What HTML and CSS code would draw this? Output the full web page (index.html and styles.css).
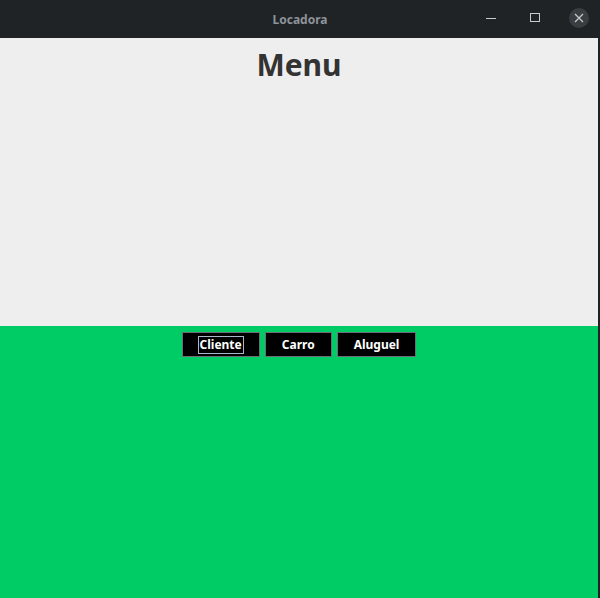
FILE: index.html
```html
<!DOCTYPE html>
<html lang="pt">
<head>
<meta charset="utf-8">
<title>Locadora</title>
<link rel="stylesheet" href="styles.css">
</head>
<body>
<div class="window">
  <header class="titlebar">
    <div class="title">Locadora</div>
    <div class="controls">
      <span class="ctl min"><svg width="12" height="12" viewBox="0 0 12 12"><line x1="1" y1="6.5" x2="11" y2="6.5" stroke="#c8cbce" stroke-width="1"/></svg></span>
      <span class="ctl max"><svg width="12" height="12" viewBox="0 0 12 12"><rect x="1.5" y="1.5" width="9" height="8" fill="none" stroke="#c8cbce" stroke-width="1"/></svg></span>
      <span class="ctl close"><svg width="10" height="10" viewBox="0 0 10 10"><path d="M1 1 L9 9 M9 1 L1 9" stroke="#c8cbce" stroke-width="1.2"/></svg></span>
    </div>
  </header>
  <div class="client">
    <section class="top">
      <h1 class="heading">Menu</h1>
    </section>
    <section class="bottom">
      <div class="buttons">
        <button class="btn"><span class="focus">Cliente</span></button>
        <button class="btn">Carro</button>
        <button class="btn">Aluguel</button>
      </div>
    </section>
  </div>
</div>
</body>
</html>
```
FILE: styles.css
```css
html, body {
  margin: 0;
  padding: 0;
}
body {
  width: 600px;
  height: 598px;
  overflow: hidden;
  background: #202326;
  font-family: "Noto Sans", "Open Sans", sans-serif;
}
.window {
  display: flex;
  flex-direction: column;
  height: 598px;
}
.titlebar {
  height: 38px;
  flex: none;
  background: #202326;
  position: relative;
  display: flex;
  align-items: center;
  justify-content: center;
}
.title {
  color: #8d939a;
  font-weight: bold;
  font-size: 12px;
}
.controls {
  position: absolute;
  right: 11px;
  top: 8px;
  display: flex;
  align-items: center;
  gap: 24px;
}
.ctl {
  width: 20px;
  height: 20px;
  display: flex;
  align-items: center;
  justify-content: center;
}
.ctl.close {
  border-radius: 50%;
  background: #3a3d41;
}
.client {
  flex: 1;
  display: flex;
  flex-direction: column;
  margin-right: 2px;
}
.top {
  height: 288px;
  background: #eeeeee;
  display: flex;
  justify-content: center;
}
.heading {
  margin: 6px 0 0;
  font-size: 30px;
  font-weight: bold;
  color: #333333;
  line-height: 42px;
}
.bottom {
  flex: 1;
  background: #00cc66;
  display: flex;
  justify-content: center;
  padding-top: 6px;
}
.buttons {
  display: flex;
  gap: 5px;
  align-items: flex-start;
}
.btn {
  background: #000000;
  color: #ffffff;
  border: 1px solid #6e6e78;
  height: 25px;
  padding: 0 16px;
  font-family: "Noto Sans", "Open Sans", sans-serif;
  font-weight: bold;
  font-size: 12px;
  display: flex;
  align-items: center;
  justify-content: center;
}
.focus {
  outline: 1px solid #a9b8c8;
  line-height: 16px;
  padding: 0 1px;
}
```
